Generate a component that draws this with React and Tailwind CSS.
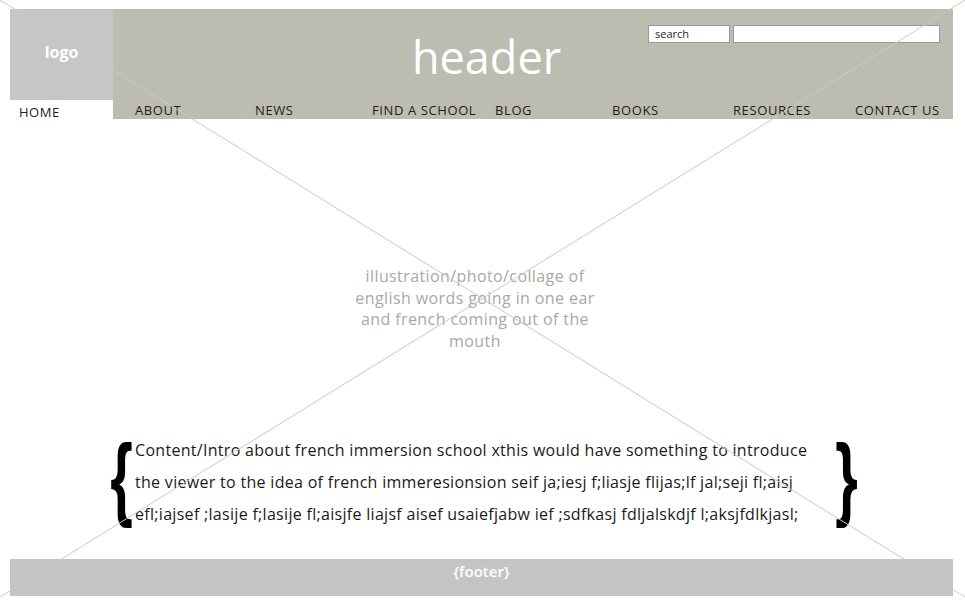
const nav = [
  { label: 'ABOUT', w: 'w-[120px]' },
  { label: 'NEWS', w: 'w-[117px]' },
  { label: 'FIND A SCHOOL', w: 'w-[123px]' },
  { label: 'BLOG', w: 'w-[117px]' },
  { label: 'BOOKS', w: 'w-[121px]' },
  { label: 'RESOURCES', w: 'w-[122px]' },
  { label: 'CONTACT US', w: 'w-[96px]' },
]

function Brace({ ch }) {
  return (
    <span className="w-[27px] shrink-0 mb-[10px] flex justify-center font-['Liberation_Sans',sans-serif] font-bold text-[58px] leading-[60px] text-black scale-y-[1.6]">
      {ch}
    </span>
  )
}

export default function App() {
  return (
    <div className="relative w-[965px] h-[600px] bg-white overflow-hidden font-['Open_Sans',sans-serif]">
      <div className="pt-[9px] pl-[10px] w-[953px]">
        {/* header */}
        <header className="flex h-[110px]">
          <div className="w-[103px] shrink-0 flex flex-col">
            <div className="h-[91px] bg-[#c6c6c6] flex items-center justify-center pb-[6px] text-white font-bold text-[16px]">
              logo
            </div>
            <a className="h-[19px] pl-[9px] pt-[3px] leading-[19px] text-[13px] tracking-[0.5px] text-[#1d1d1d]">HOME</a>
          </div>
          <div className="flex-1 bg-[#bdbcb0] flex flex-col">
            <div className="h-[91px] flex items-start">
              <h1 className="ml-[299px] mt-[23px] text-[45px] leading-[50px] font-normal text-white">
                header
              </h1>
              <div className="ml-auto mr-[13px] mt-[16px] flex gap-[3px]">
                <div className="w-[82px] h-[18px] bg-white border border-[#9a9a9a] text-[11px] leading-[16px] pl-[6px] text-[#222]">
                  search
                </div>
                <input className="w-[207px] h-[18px] bg-white border border-[#9a9a9a] outline-none" />
              </div>
            </div>
            <nav className="h-[19px] flex pl-[22px] pt-[1px] text-[13px] tracking-[0.6px] leading-[19px] text-[#1d1d1d]">
              {nav.map(n => (
                <a key={n.label} className={n.w + ' shrink-0 whitespace-nowrap'}>{n.label}</a>
              ))}
            </nav>
          </div>
        </header>

        {/* main */}
        <main className="h-[440px] flex flex-col">
          <p className="mt-[147px] w-[290px] ml-[320px] text-center text-[16px] tracking-[0.4px] leading-[21.5px] text-[#a9a9a1]">
            illustration/photo/collage of
            <br />
            english words going in one ear
            <br />
            and french coming out of the
            <br />
            mouth
          </p>
          <div className="mt-[82px] ml-[98px] flex items-center">
            <Brace ch="{" />
            <p className="w-[698px] shrink-0 whitespace-nowrap text-[16px] tracking-[0.3px] leading-[32px] text-[#1a1a1a]">
              Content/Intro about french immersion school xthis would have something to introduce
              <br />
              the viewer to the idea of french immeresionsion seif ja;iesj f;liasje flijas;lf jal;seji fl;aisj
              <br />
              efl;iajsef ;lasije f;lasije fl;aisjfe liajsf aisef usaiefjabw ief ;sdfkasj fdljalskdjf l;aksjfdlkjasl;
            </p>
            <Brace ch="}" />
          </div>
        </main>

        {/* footer */}
        <footer className="h-[37px] bg-[#c4c4c4] flex justify-center pt-[1px] text-white font-semibold text-[15px] leading-[22px]">
          {'{footer}'}
        </footer>
      </div>

      <svg className="absolute inset-0 pointer-events-none" width="965" height="600" viewBox="0 0 965 600">
        <line x1="0" y1="0" x2="965" y2="597" stroke="#c9c9c6" strokeWidth="1" />
        <line x1="965" y1="0" x2="0" y2="597" stroke="#c9c9c6" strokeWidth="1" />
      </svg>
    </div>
  )
}
